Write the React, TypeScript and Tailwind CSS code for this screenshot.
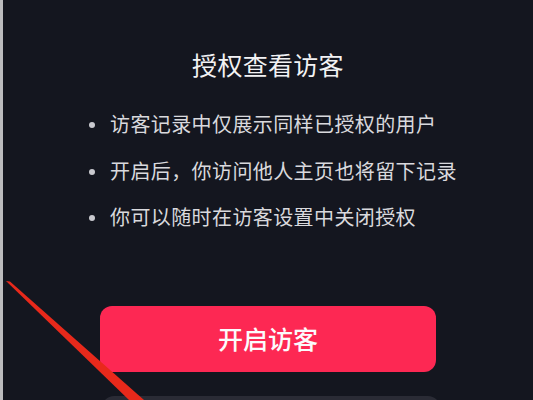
import React from "react";

const items = [
  "访客记录中仅展示同样已授权的用户",
  "开启后，你访问他人主页也将留下记录",
  "你可以随时在访客设置中关闭授权",
];

export default function App() {
  return (
    <div
      className="relative w-[533px] h-[400px] overflow-hidden flex bg-[#bcbcbe]"
      style={{ fontFamily: '"Noto Sans CJK SC", "Noto Sans", sans-serif' }}
    >
      <div className="ml-[3px] flex-1 bg-[#14161f] flex flex-col items-center">
        <h1 className="mt-[47px] text-[25px] leading-[34px] text-[#f2f2f4] font-normal tracking-[0.3px]">
          授权查看访客
        </h1>
        <ul className="mt-[29px] self-start ml-[86px] flex flex-col gap-[18.5px]">
          {items.map((t) => (
            <li key={t} className="flex items-center text-[20px] leading-[28px] text-[#d9d9dd]">
              <span className="w-[6px] h-[6px] rounded-full bg-[#c9c9cf] mr-[15px] mt-[2px]" />
              <span className="tracking-[0.4px]">{t}</span>
            </li>
          ))}
        </ul>
        <button className="mt-[75px] w-[336px] h-[66px] shrink-0 rounded-[12px] bg-[#fd2853] text-[#fbfbfc] text-[25px] font-medium flex items-center justify-center">
          开启访客
        </button>
        <div className="mt-[24px] ml-[6px] w-[338px] h-[66px] shrink-0 rounded-[12px] bg-[#2a2b35]" />
      </div>
      <svg className="absolute left-0 top-0 pointer-events-none" width="533" height="400" viewBox="0 0 533 400">
        <polygon points="6,281 10,281.5 144,400 129,400" fill="#e8291b" />
      </svg>
    </div>
  );
}
